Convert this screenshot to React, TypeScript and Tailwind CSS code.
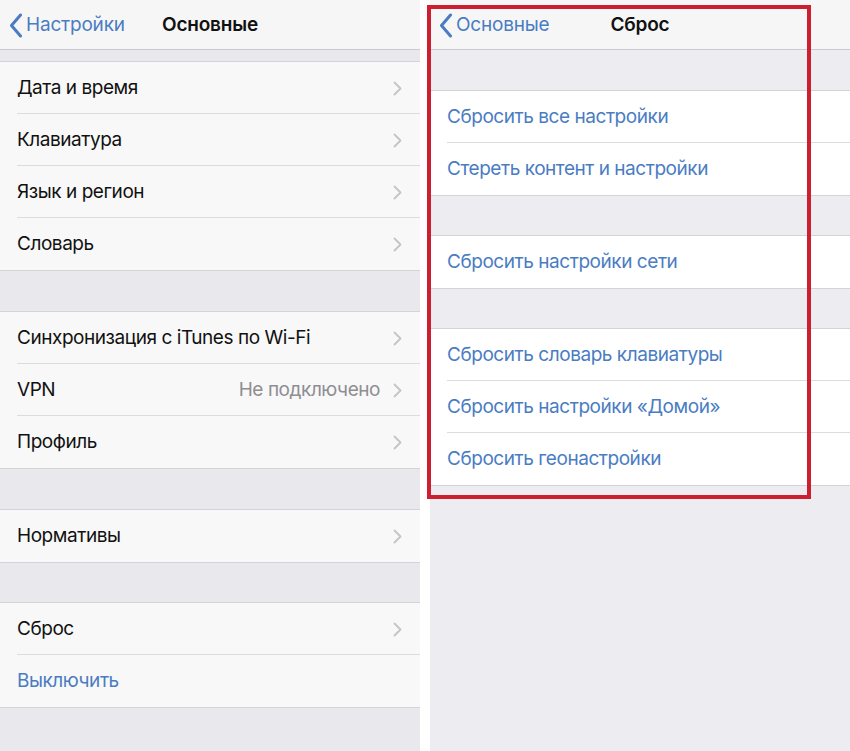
import React from "react";

const font = { fontFamily: "Inter, 'Noto Sans', sans-serif" };

function BackChevron() {
  return (
    <svg width="14" height="25" viewBox="0 0 14 25" className="shrink-0">
      <path d="M11.5 2 L2.5 12.5 L11.5 23" fill="none" stroke="#4a7cc2" strokeWidth="3" strokeLinecap="round" strokeLinejoin="round" />
    </svg>
  );
}

function Chevron() {
  return (
    <svg width="9" height="15" viewBox="0 0 9 15" className="shrink-0">
      <path d="M1.5 1.5 L7.5 7.5 L1.5 13.5" fill="none" stroke="#c4c4c9" strokeWidth="1.8" strokeLinecap="round" strokeLinejoin="round" />
    </svg>
  );
}

function Nav({ back, title }: { back: string; title: string }) {
  return (
    <div className="h-[50px] shrink-0 bg-[#f6f6f7] border-b border-[#c9c9ce] grid grid-cols-[1fr_auto_1fr] items-center pt-[2px]">
      <div className="flex items-center gap-[3px] pl-[9px]">
        <BackChevron />
        <span className="text-[19px] text-[#4a7cc2] tracking-[-0.2px]">{back}</span>
      </div>
      <div className="text-[19px] font-semibold text-[#111] tracking-[-0.2px]">{title}</div>
      <div />
    </div>
  );
}

type RowT = { label: string; value?: string; chevron?: boolean; blue?: boolean };

function Group({ rows, bg }: { rows: RowT[]; bg: string }) {
  return (
    <div className={`border-y border-[#d4d4d8] ${bg}`}>
      {rows.map((r, i) => (
        <div key={i} className="pl-[17px]">
          <div
            className={`h-[52px] flex items-center pr-[18px] pt-[1px] ${i < rows.length - 1 ? "border-b border-[#dcdce0]" : ""}`}
          >
            <span className={`flex-1 text-[19px] tracking-[-0.45px] ${r.blue ? "text-[#4a7cc2]" : "text-[#111]"}`}>
              {r.label}
            </span>
            {r.value && <span className="text-[19px] text-[#8e8e93] mr-[13px] tracking-[-0.45px]">{r.value}</span>}
            {r.chevron && <Chevron />}
          </div>
        </div>
      ))}
    </div>
  );
}

export default function App() {
  return (
    <div className="w-[850px] h-[751px] bg-white flex overflow-hidden relative" style={font}>
      <div className="w-[420px] h-full bg-[#e8e8ed] flex flex-col">
        <Nav back="Настройки" title="Основные" />
        <div className="h-[11px] shrink-0" />
        <Group
          bg="bg-[#f8f8f8]"
          rows={[
            { label: "Дата и время", chevron: true },
            { label: "Клавиатура", chevron: true },
            { label: "Язык и регион", chevron: true },
            { label: "Словарь", chevron: true },
          ]}
        />
        <div className="h-[40px] shrink-0" />
        <Group
          bg="bg-[#f8f8f8]"
          rows={[
            { label: "Синхронизация с iTunes по Wi-Fi", chevron: true },
            { label: "VPN", value: "Не подключено", chevron: true },
            { label: "Профиль", chevron: true },
          ]}
        />
        <div className="h-[40px] shrink-0" />
        <Group bg="bg-[#f8f8f8]" rows={[{ label: "Нормативы", chevron: true }]} />
        <div className="h-[39px] shrink-0" />
        <Group
          bg="bg-[#f8f8f8]"
          rows={[
            { label: "Сброс", chevron: true },
            { label: "Выключить", blue: true },
          ]}
        />
      </div>
      <div className="w-[10px] shrink-0 bg-white" />
      <div className="w-[420px] h-full bg-[#ececf1] flex flex-col">
        <Nav back="Основные" title="Сброс" />
        <div className="h-[40px] shrink-0" />
        <Group
          bg="bg-white"
          rows={[
            { label: "Сбросить все настройки", blue: true },
            { label: "Стереть контент и настройки", blue: true },
          ]}
        />
        <div className="h-[39px] shrink-0" />
        <Group bg="bg-white" rows={[{ label: "Сбросить настройки сети", blue: true }]} />
        <div className="h-[39px] shrink-0" />
        <Group
          bg="bg-white"
          rows={[
            { label: "Сбросить словарь клавиатуры", blue: true },
            { label: "Сбросить настройки «Домой»", blue: true },
            { label: "Сбросить геонастройки", blue: true },
          ]}
        />
      </div>
      <div className="absolute left-[427px] top-[5px] w-[384px] h-[494px] border-[4px] border-[#cc2030] pointer-events-none" />
    </div>
  );
}
